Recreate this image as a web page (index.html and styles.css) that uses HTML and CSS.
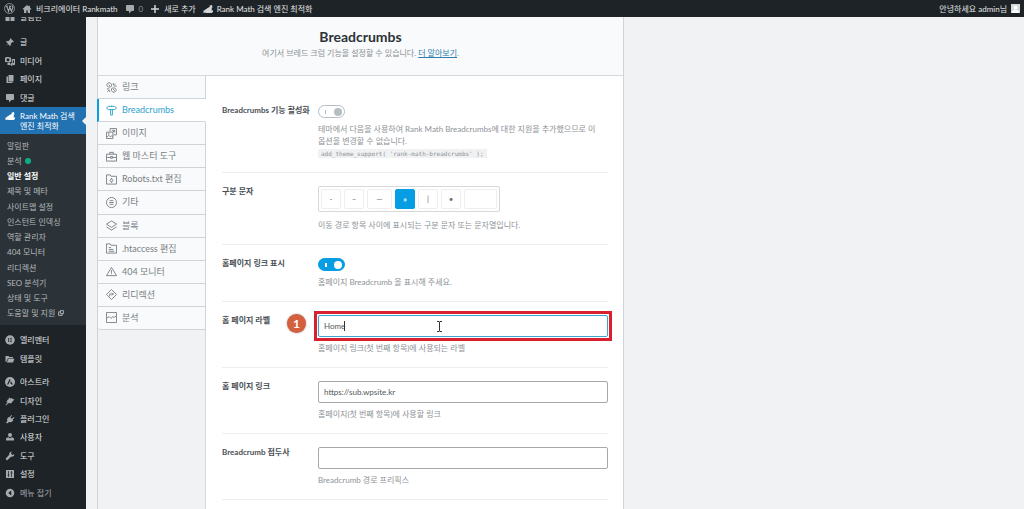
FILE: index.html
```html
<!DOCTYPE html>
<html lang="ko">
<head>
<meta charset="utf-8">
<title>Rank Math - Breadcrumbs</title>
<link rel="stylesheet" href="styles.css">
</head>
<body>
<svg width="0" height="0" class="sprite" aria-hidden="true">
  <symbol id="wp" viewBox="0 0 20 20"><circle cx="10" cy="10" r="9" fill="none" stroke="currentColor" stroke-width="1.4"/><path fill="none" stroke="currentColor" stroke-width="2" d="M3 6h4M5 6l3.4 9L10.500 8.500M9 6h4M10 6l3.500 9L16 8.500c.6-2-1.500-2.500-1-4"/></symbol>
  <symbol id="home" viewBox="0 0 20 20"><path fill="currentColor" d="M10 2 1 10l1.500 1.500L4 10.300V18h4.500v-5h3v5H16v-7.700l1.500 1.200L19 10l-3-2.700V3.500h-2.500v1.700z"/></symbol>
  <symbol id="comment" viewBox="0 0 20 20"><path fill="currentColor" d="M4 2h12c1 0 2 1 2 2v8c0 1-1 2-2 2h-3l-5 5v-5H4c-1 0-2-1-2-2V4c0-1 1-2 2-2z"/></symbol>
  <symbol id="plus" viewBox="0 0 20 20"><path fill="currentColor" d="M8.500 2h3v6.500H18v3h-6.500V18h-3v-6.500H2v-3h6.500z"/></symbol>
  <symbol id="rank" viewBox="0 0 20 20"><path fill="currentColor" d="M1 13l3-1v4H1zM4 11.500 8 9v7H4zM8 8.500 13 6v10H8zM14 5l-1.500-1.500L18 2l1 5.500L17.500 7v9H13V6zM0 17l16-2 4-3v4l-3 2H0z"/></symbol>
  <symbol id="pin" viewBox="0 0 20 20"><path fill="currentColor" d="m10.500 2 7.500 7.500-1.500 1-1.500-.5-3.500 3.500.3 3L10 18l-4-4-5 4.500L5.800 13 2 9.500 3.500 8l3 .4L10 5z"/></symbol>
  <symbol id="media" viewBox="0 0 20 20"><path fill="currentColor" fill-rule="evenodd" d="M0 3h2l1-1h5l1 1h3v9H0zm6 1.500a3 3 0 1 0 0 6 3 3 0 0 0 0-6zM13.500 6H20v10a2.500 2.500 0 1 1-2-2.500V9h-2.500v8a2.500 2.500 0 1 1-2-2.500z"/><path fill="currentColor" d="M5 13h5v5H5z"/></symbol>
  <symbol id="pages" viewBox="0 0 20 20"><path fill="currentColor" d="M7 2h10v13H7zM3 5h3v11h9v2H3z"/></symbol>
  <symbol id="groups" viewBox="0 0 20 20"><path fill="currentColor" d="M2 1h7v7H2zM11 1h7v7h-7zM1 10h8v8H1zM11 10h8v8h-8z"/></symbol>
  <symbol id="elem" viewBox="0 0 20 20"><circle cx="10" cy="10" r="9.500" fill="currentColor"/><path stroke="#1d2327" stroke-width="1.500" d="M7 6v8M9.500 6.800H14M9.500 10H14M9.500 13.200H14"/></symbol>
  <symbol id="folder" viewBox="0 0 20 20"><path fill="currentColor" d="M1 4h6l2 2h7v2.500H6L3 15l-2 1zM7 9.500h12L16 17H3.500z"/></symbol>
  <symbol id="astra" viewBox="0 0 20 20"><circle cx="10" cy="10" r="10" fill="currentColor"/><path fill="#1d2327" d="M9.500 3.500 11 6.500 6.500 15H4zM12 8.500l4 6.500h-3l-1-2h-2z"/></symbol>
  <symbol id="brush" viewBox="0 0 20 20"><path fill="currentColor" d="m8 3 3 2 3-1 1 2 4 1-4 4-3 4-3-1-3 1-4 4-1-1 4-5-3-1 3-2-1-2 3-1z"/></symbol>
  <symbol id="plug" viewBox="0 0 20 20"><path fill="currentColor" d="m12.500 2 1.500 1.200L11 7l2.500 2.500L17.500 6 19 7.500l-4 4 1.500 1.500-2 2c-2 2-5 2-6.500.8L4 19l-2-2 3-3C3.500 12 4 9.500 6 7.500L7.500 6 9 6.500z"/></symbol>
  <symbol id="user" viewBox="0 0 20 20"><circle cx="10" cy="6" r="4" fill="currentColor"/><path fill="currentColor" d="M2 17v-3c0-2 3-3.500 5-3.500l3 2.500 3-2.500c2 0 5 1.500 5 3.500v3z"/></symbol>
  <symbol id="wrench" viewBox="0 0 20 20"><path fill="currentColor" d="M18.500 6.500 15 8l-3-3 1.500-3.500C10.500 1 7.500 4 8.500 7.500L1 15.500 4 19l8-7.500c4 1 7.500-2 6.500-5z"/></symbol>
  <symbol id="settings" viewBox="0 0 20 20"><path fill="currentColor" d="M2 2h16v16H2z"/><path fill="none" stroke="#1d2327" stroke-width="1.500" d="M7 4v12M13 4v12M5 12h4M11 8h4"/></symbol>
  <symbol id="collapse" viewBox="0 0 20 20"><circle cx="10" cy="10" r="8.500" fill="currentColor"/><path fill="#1d2327" d="m12.500 5-6 5 6 5z"/></symbol>
  <symbol id="ext" viewBox="0 0 10 10"><path fill="none" stroke="currentColor" stroke-width="1.500" d="M4 3H1v6h6V6M4 1h5v5H4z"/></symbol>

  <symbol id="t-link" viewBox="0 0 24 24"><path d="M5 2h4l3 3v4l-3 2H5L2 8V5zM14 13h5l3 3v3l-3 3h-4l-3-3v-4zM6 6l3 3M15 15l4 4M16 2v5M21 4l-4 4M23 9h-5M2 15h5M3 21l4-4M8 22v-4"/></symbol>
  <symbol id="t-crumb" viewBox="0 0 24 24"><path d="M5 3h14l4 3.500-4 3.500H5L1 6.500zM10 10v12h4V10M12 1v2"/></symbol>
  <symbol id="t-image" viewBox="0 0 24 24"><path d="M9 8V1h14v14h-7M1 9h14v14H1zM2 20l4-4 3 3 3-2 3 3M13 5h6v5M15 9l4-4"/><circle cx="6" cy="13" r="1"/></symbol>
  <symbol id="t-case" viewBox="0 0 24 24"><path d="M1 7h22v15H1zM8 7V3h8v4M1 14h9M14 14h9M10 12h4v4h-4z"/></symbol>
  <symbol id="t-robots" viewBox="0 0 24 24"><path d="M1 2h8l2 3h12v17H1z"/><circle cx="12" cy="14" r="3"/><path d="M12 9v2M12 17v2"/></symbol>
  <symbol id="t-misc" viewBox="0 0 24 24"><circle cx="12" cy="12" r="11"/><path d="M8 8h8M7 12h10M8 16h8"/></symbol>
  <symbol id="t-block" viewBox="0 0 24 24"><path d="m12 2 11 7-11 7L1 9zM1 15l11 7 11-7"/></symbol>
  <symbol id="t-htac" viewBox="0 0 24 24"><path d="M1 2h8l2 3h12v17H1zM6 10h5M6 14h10M6 18h12"/></symbol>
  <symbol id="t-404" viewBox="0 0 24 24"><path d="m12 3 11 18H1zM12 9v6M12 16v2"/></symbol>
  <symbol id="t-redir" viewBox="0 0 24 24"><path d="m12 1 11 11-11 11L1 12zM8 16v-5h8M13 8l3 3-3 3"/></symbol>
  <symbol id="t-stat" viewBox="0 0 24 24"><path d="M1 1h22v22H1zM1 14l6-4 4 4 4-4 3 2 5-4"/></symbol>
</svg>

<header class="adminbar">
  <a href="#" class="bar-item" aria-label="WordPress"><svg class="bar-logo"><use href="#wp"/></svg></a>
  <a href="#" class="bar-item"><svg class="icon"><use href="#home"/></svg>비크리에이터 Rankmath</a>
  <a href="#" class="bar-item bar-count"><svg class="icon"><use href="#comment"/></svg>0</a>
  <a href="#" class="bar-item"><svg class="icon bright"><use href="#plus"/></svg>새로 추가</a>
  <a href="#" class="bar-item"><svg class="icon bright"><use href="#rank"/></svg>Rank Math 검색 엔진 최적화</a>
  <a href="#" class="bar-item bar-user">안녕하세요 admin님
    <svg class="avatar" viewBox="0 0 10 10"><path fill="#d5d7d9" d="M0 0h10v10H0z"/><circle cx="5" cy="4" r="2.200" fill="#fff"/><path fill="#fff" d="M1 10c0-3 2-4 4-4s4 1 4 4z"/></svg></a>
</header>

<div class="shell">
  <nav class="sidebar" aria-label="관리 메뉴">
    <a href="#" class="menu-item under-bar"><svg class="icon"><use href="#groups"/></svg>알림판</a>
    <div class="menu-group">
      <a href="#" class="menu-item"><svg class="icon"><use href="#pin"/></svg>글</a>
      <a href="#" class="menu-item"><svg class="icon"><use href="#media"/></svg>미디어</a>
      <a href="#" class="menu-item"><svg class="icon"><use href="#pages"/></svg>페이지</a>
      <a href="#" class="menu-item"><svg class="icon"><use href="#comment"/></svg>댓글</a>
    </div>
    <a href="#" class="menu-item current"><svg class="icon"><use href="#rank"/></svg><span>Rank Math 검색<br>엔진 최적화</span></a>
    <div class="submenu">
      <a href="#">알림판</a>
      <a href="#">분석 <span class="dot"></span></a>
      <a href="#" class="active">일반 설정</a>
      <a href="#">제목 및 메타</a>
      <a href="#">사이트맵 설정</a>
      <a href="#">인스턴트 인덱싱</a>
      <a href="#">역할 관리자</a>
      <a href="#">404 모니터</a>
      <a href="#">리디렉션</a>
      <a href="#">SEO 분석기</a>
      <a href="#">상태 및 도구</a>
      <a href="#">도움말 및 지원 <svg class="ext"><use href="#ext"/></svg></a>
    </div>
    <div class="menu-group pair">
      <a href="#" class="menu-item"><svg class="icon"><use href="#elem"/></svg>엘리멘터</a>
      <a href="#" class="menu-item"><svg class="icon"><use href="#folder"/></svg>템플릿</a>
    </div>
    <div class="menu-group tail">
      <a href="#" class="menu-item"><svg class="icon"><use href="#astra"/></svg>아스트라</a>
      <a href="#" class="menu-item"><svg class="icon"><use href="#brush"/></svg>디자인</a>
      <a href="#" class="menu-item"><svg class="icon"><use href="#plug"/></svg>플러그인</a>
      <a href="#" class="menu-item"><svg class="icon"><use href="#user"/></svg>사용자</a>
      <a href="#" class="menu-item"><svg class="icon"><use href="#wrench"/></svg>도구</a>
      <a href="#" class="menu-item"><svg class="icon"><use href="#settings"/></svg>설정</a>
      <button type="button" class="menu-item collapse"><svg class="icon"><use href="#collapse"/></svg>메뉴 접기</button>
    </div>
  </nav>

  <main class="panel">
    <header class="panel-head">
      <h1>Breadcrumbs</h1>
      <p>여기서 브레드 크럼 기능을 설정할 수 있습니다. <a href="#">더 알아보기</a>.</p>
    </header>
    <div class="panel-body">
      <div class="tabs-col">
        <nav class="tabs" aria-label="설정 탭">
          <a href="#"><svg><use href="#t-link"/></svg>링크</a>
          <a href="#" class="on"><svg><use href="#t-crumb"/></svg>Breadcrumbs</a>
          <a href="#"><svg><use href="#t-image"/></svg>이미지</a>
          <a href="#"><svg><use href="#t-case"/></svg>웹 마스터 도구</a>
          <a href="#"><svg><use href="#t-robots"/></svg>Robots.txt 편집</a>
          <a href="#"><svg><use href="#t-misc"/></svg>기타</a>
          <a href="#"><svg><use href="#t-block"/></svg>블록</a>
          <a href="#"><svg><use href="#t-htac"/></svg>.htaccess 편집</a>
          <a href="#"><svg><use href="#t-404"/></svg>404 모니터</a>
          <a href="#"><svg><use href="#t-redir"/></svg>리디렉션</a>
          <a href="#"><svg><use href="#t-stat"/></svg>분석</a>
        </nav>
      </div>
      <form class="fields">
        <div class="row first">
          <label for="enable">Breadcrumbs 기능 활성화</label>
          <div class="control">
            <input type="checkbox" class="switch" id="enable" disabled>
            <p>테마에서 다음을 사용하여 Rank Math Breadcrumbs에 대한 지원을 추가했으므로 이<br>옵션을 변경할 수 없습니다.<br><code>add_theme_support( 'rank-math-breadcrumbs' );</code></p>
          </div>
        </div>
        <div class="row">
          <span class="label" id="sep">구분 문자</span>
          <div class="control">
            <div class="seps" role="group" aria-labelledby="sep">
              <button type="button">-</button>
              <button type="button">–</button>
              <button type="button" class="wide">—</button>
              <button type="button" class="on">»</button>
              <button type="button">|</button>
              <button type="button">•</button>
              <input type="text" aria-label="사용자 정의 구분 문자">
            </div>
            <p>이동 경로 항목 사이에 표시되는 구분 문자 또는 문자열입니다.</p>
          </div>
        </div>
        <div class="row">
          <label for="show">홈페이지 링크 표시</label>
          <div class="control">
            <input type="checkbox" class="switch" id="show" checked>
            <p>홈페이지 Breadcrumb 을 표시해 주세요.</p>
          </div>
        </div>
        <div class="row">
          <label for="hlabel">홈 페이지 라벨</label>
          <div class="control marked">
            <span class="step">1</span>
            <div class="highlight">
              <input type="text" class="text focus" id="hlabel" value="Home">
              <span class="caret"></span>
              <svg class="ibeam" viewBox="0 0 7 11"><path fill="none" stroke="#333" d="M1 .5h2l.5.500.500-.500h2M3.500 1v9M1 10.500h2l.5-.5.5.5h2"/></svg>
            </div>
            <p>홈페이지 링크(첫 번째 항목)에 사용되는 라벨</p>
          </div>
        </div>
        <div class="row">
          <label for="hlink">홈 페이지 링크</label>
          <div class="control">
            <input type="text" class="text" id="hlink" value="https://sub.wpsite.kr">
            <p>홈페이지(첫 번째 항목)에 사용할 링크</p>
          </div>
        </div>
        <div class="row">
          <label for="prefix">Breadcrumb 접두사</label>
          <div class="control">
            <input type="text" class="text" id="prefix">
            <p>Breadcrumb 경로 프리픽스</p>
          </div>
        </div>
      </form>
    </div>
  </main>
</div>
</body>
</html>
```
FILE: styles.css
```css
* { box-sizing: border-box; }
html { height: 100%; overflow: hidden; }
body {
  margin: 0;
  min-height: 100%;
  display: flex;
  flex-direction: column;
  background: #f0f2f3;
  color: #3c434a;
  font: 8px/12px Lato, "Noto Sans CJK KR", sans-serif;
}
a { color: inherit; text-decoration: none; }
button, input { font: inherit; color: inherit; }
p, h1 { margin: 0; }
.sprite { position: absolute; }
.icon { width: 10px; height: 10px; color: #a7aaad; flex: none; }

/* Admin bar */
.adminbar {
  position: relative;
  z-index: 1;
  display: flex;
  align-items: center;
  gap: 7px;
  height: 17px;
  padding: 0 4px;
  background: #1d2327;
  color: #e4e5e6;
}
.bar-item { display: flex; align-items: center; gap: 4px; white-space: nowrap; }
.bar-logo { width: 11px; height: 11px; color: #a7aaad; }
.bar-count { color: #8c9196; }
.icon.bright { color: #d4d6d8; }
.bar-user { margin-left: auto; }
.avatar { width: 9px; height: 9px; }

/* Sidebar */
.shell { flex: 1; display: flex; align-items: stretch; }
.sidebar {
  flex: none;
  width: 86px;
  display: flex;
  flex-direction: column;
  background: #1d2327;
  color: #e4e5e6;
}
.menu-item {
  display: flex;
  align-items: center;
  gap: 5px;
  padding: 0 5px;
  border: 0;
  background: none;
  text-align: left;
}
.under-bar { margin: -6px 0 10px; }
.menu-group { display: grid; grid-auto-rows: 1fr; min-height: 74px; }
.menu-group.pair { min-height: 37px; margin: 6px 0 5px; }
.menu-group.tail { min-height: 129px; }
.current {
  position: relative;
  align-items: flex-start;
  padding-top: 4px;
  padding-bottom: 3px;
  background: #2271b1;
  color: #fff;
  line-height: 10px;
}
.current .icon { color: #fff; }
.current::after {
  content: "";
  position: absolute;
  right: 0;
  top: 10px;
  border: 4px solid transparent;
  border-right-color: #f0f2f3;
  border-left: 0;
}
.submenu {
  display: flex;
  flex-direction: column;
  min-height: 191px;
  padding: 4px 7px;
  background: #2c3338;
  color: #b5b8bb;
}
.submenu a { flex: 1; display: flex; align-items: center; gap: 3px; }
.submenu .active { color: #fff; font-weight: 700; }
.dot { width: 6px; height: 6px; border-radius: 50%; background: #10ac84; }
.ext { width: 6px; height: 6px; }
.collapse { color: #a7aaad; }

/* Panel */
.panel {
  flex: 0 1 527px;
  margin-left: 11px;
  display: flex;
  flex-direction: column;
  background: #fff;
  border: 1px solid #cfd4d8;
  border-width: 0 1px;
}
.panel-head {
  padding: 10px 0 16px;
  background: #f8fafb;
  border-bottom: 1px solid #d5d9dc;
  text-align: center;
  color: #8a9094;
}
.panel-head h1 { font-size: 14px; line-height: 20px; font-weight: 700; color: #2c3338; }
.panel-head a { color: #2f7fae; text-decoration: underline; }
.panel-body { flex: 1; display: flex; }
.tabs-col { flex: none; width: 108px; background: #f0f2f3; border-right: 1px solid #d5d9dc; }
.tabs {
  display: grid;
  grid-auto-rows: 1fr;
  min-height: 254px;
  margin-right: -1px;
  font-size: 9px;
  color: #787e83;
}
.tabs a {
  display: flex;
  align-items: center;
  gap: 5px;
  padding-left: 8px;
  background: #f8fafb;
  border-bottom: 1px solid #cfd4d8;
  border-right: 1px solid #cfd4d8;
}
.tabs a:last-child { border-bottom-left-radius: 3px; }
.tabs svg { width: 11px; height: 11px; fill: none; stroke: currentColor; stroke-width: 2px; }
.tabs .on {
  margin-left: -1px;
  padding-left: 7px;
  border-left: 2px solid #069de3;
  border-right-color: #fff;
  background: #fff;
  color: #2f9fcf;
}

/* Fields */
.fields { flex: 1; min-width: 0; padding: 14px 15px 0 16px; }
.row {
  display: grid;
  grid-template-columns: 96px 1fr;
  padding: 12px 0 13px;
  border-bottom: 1px solid #eceeef;
}
.row > label, .label { font-weight: 700; color: #4a5055; }
.control { min-width: 0; padding-top: 1px; color: #8d9296; }
.first { padding: 14px 0 12px; }
.control p { padding-top: 5px; }
code { padding: 1px 3px; background: #f0f1f2; font-family: "DejaVu Sans Mono", monospace; font-size: 6px; }
.switch {
  appearance: none;
  display: block;
  position: relative;
  width: 27px;
  height: 13px;
  margin: 0;
  border: 1px solid #b5bfc2;
  border-radius: 7px;
  background: #fff;
}
.switch::before {
  content: "";
  position: absolute;
  left: 6px;
  top: 4px;
  width: 1px;
  height: 4px;
  background: #b5bfc2;
}
.switch::after {
  content: "";
  position: absolute;
  right: 2px;
  top: 2px;
  width: 8px;
  height: 8px;
  border-radius: 50%;
  background: #b5bfc2;
}
.switch:checked { background: #069de3; border-color: #069de3; }
.switch:checked::before, .switch:checked::after { background: #fff; }
.switch:checked::before { width: 2px; }
.seps {
  display: flex;
  width: max-content;
  gap: 3px;
  padding: 2px;
  border: 1px solid #d5d9dc;
  border-radius: 2px;
}
.seps + p { padding-top: 7px; }
.seps button, .seps input {
  width: 20px;
  height: 20px;
  padding: 0;
  border: 1px solid #eceeef;
  border-radius: 2px;
  background: #fff;
  color: #6b7176;
}
.seps .wide { width: 25px; }
.seps input { width: 33px; }
.seps .on { background: #069de3; border-color: #069de3; color: #fff; font-weight: 700; }
.text {
  display: block;
  width: 100%;
  height: 22px;
  padding: 0 5px;
  border: 1px solid #a4a9ad;
  border-radius: 2px;
  background: #fff;
  color: #50575e;
}
.focus { border-color: #3aa5d0; outline: 0; }
.marked { position: relative; }
.highlight { position: relative; }
.highlight::after {
  content: "";
  position: absolute;
  inset: -4px;
  border: 3px solid #d9202e;
}
.step {
  position: absolute;
  left: -31px;
  top: 0;
  width: 19px;
  height: 19px;
  border-radius: 50%;
  background: #d4603f;
  box-shadow: 0 0 2px #999;
  color: #fff;
  font-size: 12px;
  line-height: 19px;
  font-weight: 700;
  text-align: center;
}
.caret { position: absolute; left: 26px; top: 6px; width: 1px; height: 10px; background: #333; }
.ibeam { position: absolute; left: 118px; top: 6px; width: 7px; height: 11px; }
```
